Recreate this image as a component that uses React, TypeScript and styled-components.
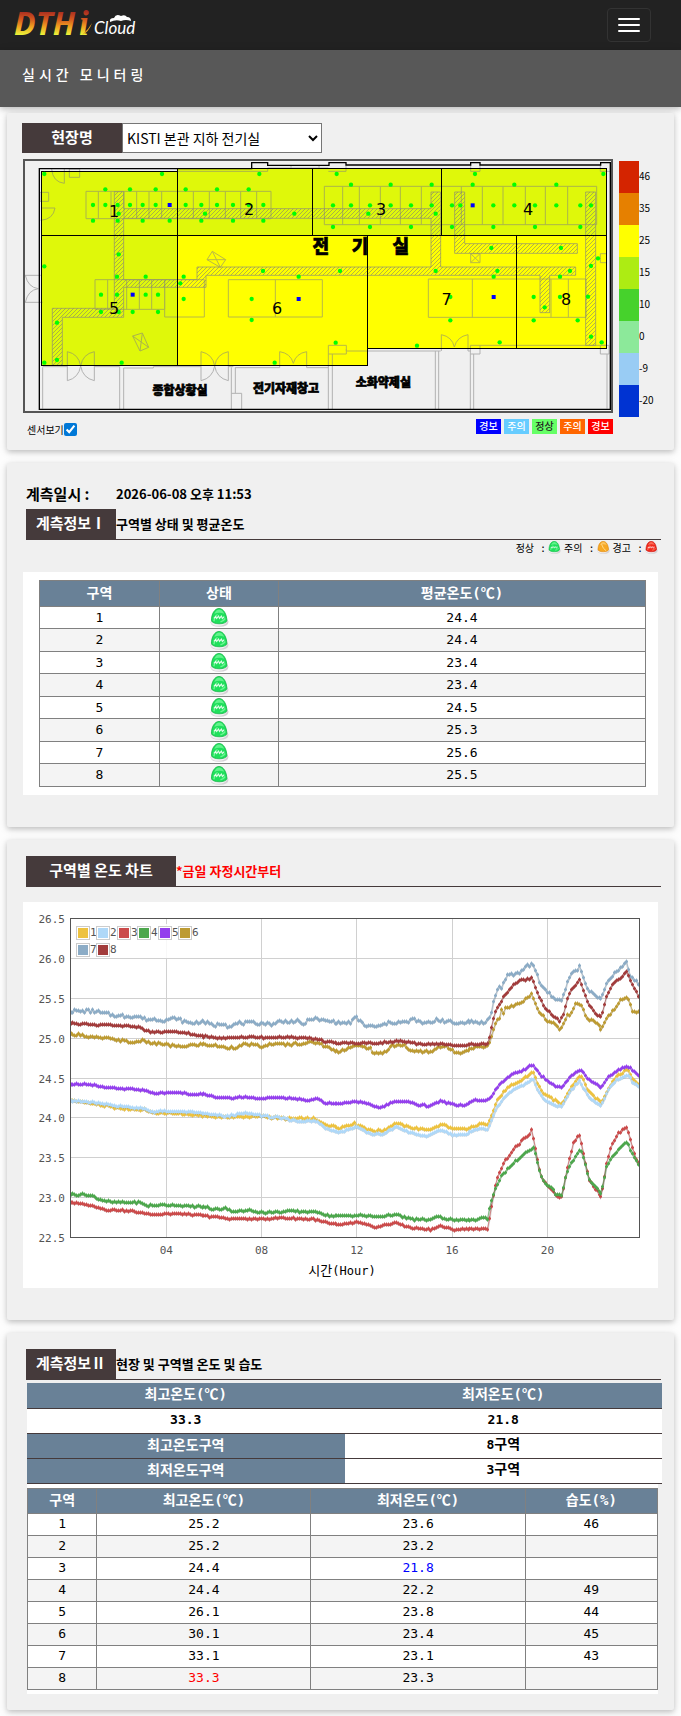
import { useState } from 'react';
import styled, { createGlobalStyle } from 'styled-components';

const SANS = "'Noto Sans CJK KR', 'Open Sans', sans-serif";
const MONO = "'DejaVu Sans Mono', 'Noto Sans CJK KR', monospace";

/* ---------- data ---------- */

const scale = [
  { color: '#d42400', label: '46' },
  { color: '#e68000', label: '35' },
  { color: '#ffff00', label: '25' },
  { color: '#adec13', label: '15' },
  { color: '#46d22c', label: '10' },
  { color: '#8ce99a', label: '0' },
  { color: '#99ccf4', label: '-9' },
  { color: '#0033d2', label: '-20' },
];

const levels = [
  { bg: '#0000ff', fg: '#fff', label: '경보' },
  { bg: '#66ccff', fg: '#fff', label: '주의' },
  { bg: '#66ff66', fg: '#222', label: '정상' },
  { bg: '#ff6600', fg: '#fff', label: '주의' },
  { bg: '#ff0000', fg: '#fff', label: '경보' },
];

const averages = ['24.4', '24.4', '23.4', '23.4', '24.5', '25.3', '25.6', '25.5'];

type ZoneRow = { high: string; low: string; humidity: string; highTone?: string; lowTone?: string };

const zoneRows: ZoneRow[] = [
  { high: '25.2', low: '23.6', humidity: '46' },
  { high: '25.2', low: '23.2', humidity: '' },
  { high: '24.4', low: '21.8', humidity: '', lowTone: '#0000ff' },
  { high: '24.4', low: '22.2', humidity: '49' },
  { high: '26.1', low: '23.8', humidity: '44' },
  { high: '30.1', low: '23.4', humidity: '45' },
  { high: '33.1', low: '23.1', humidity: '43' },
  { high: '33.3', low: '23.3', humidity: '', highTone: '#ff0000' },
];

// [hour, temperature] pairs, noise is the sensor jitter in degrees
const series = [
  {
    color: '#edc240', noise: 0.012,
    keys: [[0, 24.22], [1, 24.18], [2, 24.12], [3.2, 24.1], [3.4, 24.06], [4.5, 24.06], [5, 24.04], [6.5, 24.01], [8, 24.02], [9, 23.99], [10.2, 23.99], [10.6, 23.92], [11.3, 23.88], [11.9, 23.93], [12.2, 23.9], [12.6, 23.84], [13.1, 23.84], [13.65, 23.94], [14, 23.9], [14.6, 23.86], [15.1, 23.86], [15.6, 23.92], [16, 23.86], [16.7, 23.86], [17.2, 23.93], [17.5, 23.92], [17.7, 24.06], [17.9, 24.22], [18.3, 24.37], [18.8, 24.45], [19.2, 24.53], [19.4, 24.59], [19.6, 24.41], [19.9, 24.29], [20.6, 24.17], [20.9, 24.35], [21.38, 24.55], [21.7, 24.34], [22.28, 24.18], [22.6, 24.39], [22.9, 24.52], [23.35, 24.61], [23.5, 24.55], [23.7, 24.45], [23.86, 24.4]],
  },
  {
    color: '#afd8f8', noise: 0.008,
    keys: [[0, 24.22], [1, 24.19], [2, 24.15], [3, 24.12], [3.4, 24.08], [4.5, 24.08], [5.5, 24.06], [6.5, 24.02], [7.4, 24.06], [8, 24.03], [9, 23.99], [9.5, 23.96], [10.3, 23.96], [10.7, 23.87], [11.3, 23.82], [12, 23.89], [12.6, 23.8], [13.1, 23.79], [13.65, 23.89], [14.2, 23.82], [14.8, 23.77], [15.1, 23.79], [15.5, 23.85], [16, 23.79], [16.6, 23.79], [17, 23.86], [17.5, 23.86], [17.7, 23.99], [17.9, 24.14], [18.3, 24.29], [18.7, 24.38], [19.1, 24.42], [19.4, 24.49], [19.6, 24.35], [19.9, 24.22], [20.4, 24.15], [20.6, 24.15], [20.9, 24.31], [21.34, 24.47], [21.7, 24.27], [22.25, 24.15], [22.6, 24.36], [22.9, 24.47], [23.45, 24.54], [23.6, 24.44], [23.86, 24.4]],
  },
  {
    color: '#cb4b4b', noise: 0.01,
    keys: [[0, 22.94], [0.5, 22.92], [1.2, 22.88], [1.5, 22.85], [2.2, 22.84], [3, 22.81], [3.4, 22.79], [4, 22.8], [5, 22.79], [5.7, 22.77], [6.5, 22.74], [8, 22.73], [8.8, 22.75], [10.2, 22.73], [10.9, 22.67], [11.3, 22.66], [12, 22.69], [12.9, 22.63], [13.6, 22.69], [14.3, 22.62], [15.1, 22.6], [15.5, 22.65], [16, 22.6], [17, 22.61], [17.52, 22.61], [17.62, 22.82], [17.75, 23.03], [17.95, 23.3], [18.3, 23.49], [18.7, 23.64], [19.1, 23.76], [19.26, 23.79], [19.34, 23.85], [19.5, 23.62], [19.7, 23.3], [19.9, 23.18], [20.2, 23.1], [20.45, 23.01], [20.6, 23.01], [20.75, 23.26], [20.95, 23.53], [21.1, 23.7], [21.34, 23.79], [21.5, 23.55], [21.75, 23.22], [22.1, 23.07], [22.28, 23.01], [22.5, 23.43], [22.7, 23.64], [22.95, 23.79], [23.35, 23.89], [23.5, 23.73], [23.65, 23.55], [23.86, 23.42]],
  },
  {
    color: '#4da74d', noise: 0.011,
    keys: [[0, 23.04], [0.5, 23.04], [0.9, 23.02], [1.2, 22.98], [1.8, 22.94], [2.9, 22.94], [3.2, 22.9], [4, 22.91], [4.8, 22.9], [5.7, 22.88], [6, 22.85], [6.5, 22.87], [6.8, 22.83], [7.5, 22.84], [8.2, 22.81], [9, 22.83], [10.4, 22.82], [10.7, 22.78], [11.3, 22.77], [12, 22.78], [12.9, 22.76], [13.6, 22.79], [14.3, 22.73], [15, 22.72], [15.4, 22.76], [16, 22.72], [17, 22.72], [17.3, 22.75], [17.5, 22.74], [17.62, 22.91], [17.8, 23.1], [18.05, 23.25], [18.3, 23.35], [18.7, 23.46], [19.1, 23.56], [19.45, 23.63], [19.55, 23.47], [19.7, 23.3], [19.95, 23.15], [20.2, 23.13], [20.35, 23.04], [20.6, 23.03], [20.75, 23.26], [20.95, 23.41], [21.38, 23.61], [21.5, 23.49], [21.75, 23.22], [22.05, 23.13], [22.25, 23.04], [22.35, 23.16], [22.5, 23.39], [22.8, 23.54], [23.1, 23.63], [23.35, 23.7], [23.55, 23.57], [23.86, 23.4]],
  },
  {
    color: '#9440ed', noise: 0.008,
    keys: [[0, 24.43], [1, 24.41], [1.2, 24.39], [2, 24.37], [3, 24.35], [3.5, 24.31], [4.5, 24.32], [5, 24.3], [5.7, 24.29], [6, 24.27], [6.5, 24.25], [7.5, 24.26], [8, 24.24], [8.8, 24.26], [10, 24.22], [10.3, 24.25], [10.6, 24.19], [11.3, 24.18], [12, 24.21], [12.5, 24.17], [12.9, 24.13], [13.2, 24.15], [13.6, 24.21], [14, 24.21], [14.5, 24.17], [15, 24.15], [15.5, 24.21], [16.1, 24.17], [16.5, 24.16], [17, 24.22], [17.5, 24.22], [17.7, 24.27], [17.85, 24.37], [18.2, 24.47], [18.6, 24.56], [19, 24.6], [19.4, 24.67], [19.7, 24.54], [20.2, 24.42], [20.6, 24.37], [20.95, 24.52], [21.38, 24.61], [21.7, 24.48], [22.28, 24.38], [22.6, 24.52], [23, 24.6], [23.35, 24.65], [23.6, 24.6], [23.86, 24.53]],
  },
  {
    color: '#bd9b33', noise: 0.015,
    keys: [[0, 25.04], [0.5, 25.05], [0.7, 25.01], [1.5, 25], [2.2, 24.97], [2.6, 24.94], [2.9, 24.97], [3.4, 24.94], [4, 24.92], [4.5, 24.89], [5, 24.91], [5.6, 24.92], [6.2, 24.9], [6.6, 24.88], [7, 24.89], [7.4, 24.93], [8.1, 24.89], [8.4, 24.93], [9, 24.92], [10.4, 24.95], [10.7, 24.89], [11.2, 24.83], [11.5, 24.86], [12, 24.9], [12.55, 24.88], [12.7, 24.82], [12.95, 24.8], [13.2, 24.83], [13.5, 24.91], [14, 24.91], [14.1, 24.86], [14.6, 24.83], [15.2, 24.83], [15.35, 24.89], [15.7, 24.9], [16.15, 24.82], [16.4, 24.83], [17, 24.89], [17.52, 24.9], [17.7, 25.06], [17.87, 25.23], [18, 25.25], [18.08, 25.37], [18.15, 25.31], [18.25, 25.38], [18.5, 25.4], [18.9, 25.44], [19.2, 25.51], [19.34, 25.56], [19.6, 25.35], [20, 25.21], [20.3, 25.18], [20.5, 25.11], [20.7, 25.19], [20.85, 25.31], [20.95, 25.27], [21.2, 25.46], [21.4, 25.42], [21.6, 25.27], [22, 25.19], [22.15, 25.18], [22.28, 25.1], [22.4, 25.19], [22.6, 25.29], [22.9, 25.39], [23.1, 25.49], [23.35, 25.51], [23.5, 25.42], [23.6, 25.32], [23.86, 25.32]],
  },
  {
    color: '#8cacc6', noise: 0.02,
    keys: [[0, 25.34], [0.9, 25.34], [2, 25.28], [2.9, 25.27], [3.1, 25.24], [4, 25.23], [4.4, 25.25], [4.9, 25.19], [5.6, 25.21], [6, 25.16], [6.5, 25.19], [6.6, 25.14], [7, 25.19], [8, 25.19], [8.5, 25.18], [8.7, 25.21], [9.5, 25.21], [9.7, 25.17], [10.1, 25.25], [10.5, 25.23], [11.3, 25.19], [11.7, 25.19], [12, 25.26], [12.4, 25.15], [12.97, 25.15], [13.4, 25.2], [14.1, 25.2], [14.4, 25.24], [14.7, 25.19], [15.1, 25.19], [15.35, 25.24], [15.9, 25.2], [16.1, 25.18], [16.6, 25.21], [17.45, 25.19], [17.66, 25.31], [17.77, 25.48], [17.94, 25.64], [18.08, 25.64], [18.33, 25.78], [18.9, 25.83], [19.17, 25.92], [19.45, 25.92], [19.69, 25.67], [20.04, 25.58], [20.3, 25.48], [20.6, 25.48], [20.9, 25.76], [21.34, 25.9], [21.67, 25.62], [22, 25.52], [22.28, 25.49], [22.6, 25.75], [23.05, 25.86], [23.35, 25.96], [23.5, 25.79], [23.86, 25.67]],
  },
  {
    color: '#a23c3c', noise: 0.01,
    keys: [[0, 25.19], [1, 25.17], [2.9, 25.14], [3.1, 25.1], [3.5, 25.07], [4, 25.08], [4.8, 25.07], [5.3, 25.03], [6, 25.01], [8, 25.01], [9, 25.01], [10, 25], [10.5, 24.98], [10.6, 24.95], [11.3, 24.94], [13, 24.94], [13.7, 24.96], [14.6, 24.93], [15.1, 24.92], [15.6, 24.93], [16.2, 24.9], [17.1, 24.93], [17.52, 24.93], [17.62, 25.06], [17.8, 25.31], [17.94, 25.39], [18.1, 25.48], [18.4, 25.61], [18.75, 25.71], [19.2, 25.74], [19.34, 25.76], [19.6, 25.56], [19.9, 25.37], [20.3, 25.27], [20.5, 25.22], [20.64, 25.27], [20.9, 25.56], [21.34, 25.73], [21.44, 25.65], [21.7, 25.44], [22.1, 25.28], [22.28, 25.27], [22.5, 25.52], [22.8, 25.7], [23.1, 25.75], [23.35, 25.83], [23.5, 25.72], [23.86, 25.51]],
  },
];

/* ---------- styles ---------- */

const GlobalStyle = createGlobalStyle`
  * { box-sizing: border-box; }
  body {
    margin: 0;
    background: #fdfdfd;
    color: #000;
    font-family: ${SANS};
    font-size: 14px;
  }
`;

const Header = styled.header`
  display: flex;
  align-items: center;
  justify-content: space-between;
  height: 50px;
  padding: 0 30px 0 12px;
  background: #222;
`;

const LogoLink = styled.a`
  display: block;
  height: 50px;
`;

const MenuButton = styled.button`
  display: flex;
  flex-direction: column;
  justify-content: center;
  gap: 4px;
  width: 44px;
  height: 34px;
  padding: 0 10px;
  background: transparent;
  border: 1px solid #333;
  border-radius: 4px;
`;

const MenuBar = styled.span`
  height: 2px;
  border-radius: 1px;
  background: #fff;
`;

const TitleBar = styled.div`
  height: 57px;
  padding: 12px 22px;
  background: #585858;
  box-shadow: 0 2px 5px rgba(0, 0, 0, 0.16), 0 2px 10px rgba(0, 0, 0, 0.12);
`;

const PageTitle = styled.h1`
  margin: 0;
  color: #fff;
  font-size: 14px;
  font-weight: 500;
  line-height: 24px;
  letter-spacing: 4px;
`;

const Main = styled.main`
  display: flex;
  flex-direction: column;
  gap: 13px;
  padding: 6px 7px 7px;
`;

const Card = styled.section<{ $pad: string }>`
  padding: ${p => p.$pad};
  background: #f0f0f0;
  border-radius: 2px;
  box-shadow: 0 2px 5px rgba(0, 0, 0, 0.16), 0 2px 10px rgba(0, 0, 0, 0.12);
`;

const SiteRow = styled.div`
  display: flex;
  height: 30px;
`;

const SiteLabel = styled.label`
  width: 100px;
  background: #453a3b;
  color: #fff;
  font-size: 15px;
  font-weight: 700;
  line-height: 28px;
  text-align: center;
`;

const SiteSelect = styled.select`
  width: 200px;
  padding: 0;
  background: #fff;
  border: 1px solid #767676;
  border-radius: 0;
  color: #000;
  font-family: ${SANS};
  font-size: 14px;
`;

const PlanRow = styled.div`
  display: flex;
  gap: 6px;
  margin: 6px 0 0 1px;
`;

const PlanColumn = styled.div`
  flex: 1;
  min-width: 0;
`;

const PlanFrame = styled.div`
  border: 2px solid #555;

  svg {
    display: block;
    width: 100%;
  }
`;

const PlanFooter = styled.div`
  display: flex;
  justify-content: space-between;
  margin-top: 6px;
`;

const SensorToggle = styled.label`
  display: flex;
  align-items: center;
  padding: 4px 0 0 4px;
  font-size: 10px;
  line-height: 13px;

  input {
    width: 13px;
    height: 13px;
    margin: 0;
    accent-color: #0078d7;
  }
`;

const Levels = styled.div`
  display: flex;
  gap: 3px;
`;

const Level = styled.span<{ $bg: string; $fg: string }>`
  width: 25px;
  height: 15px;
  background: ${p => p.$bg};
  color: ${p => p.$fg};
  font-size: 10px;
  font-weight: 500;
  line-height: 14px;
  text-align: center;
`;

const ScaleColumn = styled.div`
  width: 40px;
  padding-top: 2px;
`;

const ScaleStep = styled.div<{ $color: string }>`
  height: 32px;
  border-left: 20px solid ${p => p.$color};
  font-size: 10px;
  line-height: 30px;
`;

const MeasuredAt = styled.div`
  display: grid;
  grid-template-columns: 90px 1fr;
  align-items: center;
  height: 28px;
  margin: 0 0 2px 3px;
  font-size: 15px;
  font-weight: 700;

  time {
    font-size: 13px;
  }
`;

const Heading = styled.div`
  display: flex;
  align-items: center;
  height: 31px;
  margin: 0 -3px 0 3px;
  border-bottom: 1px solid #453a3b;
`;

const HeadingLabel = styled.h2<{ $wide?: boolean }>`
  width: ${p => (p.$wide ? '150px' : '90px')};
  height: 30px;
  margin: 0;
  background: #453a3b;
  color: #fff;
  font-size: 15px;
  font-weight: 700;
  line-height: 28px;
  text-align: center;
`;

const HeadingNote = styled.span<{ $alert?: boolean }>`
  color: ${p => (p.$alert ? '#ff0000' : '#000')};
  font-size: 13px;
  font-weight: 700;
  line-height: 28px;
`;

const StatusLegend = styled.div`
  display: flex;
  align-items: center;
  justify-content: flex-end;
  gap: 3px;
  height: 15px;
  margin-bottom: 17px;
  font-family: ${MONO};
  font-size: 10px;
`;

const StatusItem = styled.span`
  display: flex;
  align-items: center;
  gap: 2px;
`;

const Panel = styled.div<{ $pad?: string }>`
  padding: ${p => p.$pad || '0'};
  background: #fff;

  > svg {
    display: block;
    width: 100%;
  }
`;

const ChartPanel = styled(Panel)`
  margin-top: 15px;
`;

const DataTable = styled.table<{ $roomy?: boolean }>`
  width: 100%;
  border-collapse: collapse;
  table-layout: fixed;
  font-family: ${MONO};
  font-size: 13px;

  th,
  td {
    padding: 0;
    border: 1px solid #808080;
    text-align: center;
  }

  th {
    height: ${p => (p.$roomy ? '26px' : '25px')};
    padding-bottom: 2px;
    background: #698197;
    color: #fff;
    font-size: 14px;
    line-height: 20px;
  }

  td {
    height: 22px;
    line-height: 18px;
  }

  tbody tr:nth-child(even) td {
    height: ${p => (p.$roomy ? '23px' : '22px')};
    background: #f4f4f4;
  }

  svg {
    display: block;
    margin: 0 auto;
  }
`;

const Tone = styled.span<{ $color?: string }>`
  color: ${p => p.$color || '#000'};
`;

const SummaryTable = styled.table`
  width: calc(100% + 4px);
  margin-top: 3px;
  border-collapse: collapse;
  table-layout: fixed;
  font-family: ${MONO};
  font-size: 14px;

  th,
  td {
    height: 25px;
    padding: 0 0 2px;
    border-bottom: 1px solid #453a3b;
    font-weight: 700;
    line-height: 20px;
    text-align: center;
  }

  th {
    background: #698197;
    color: #fff;
  }

  td {
    background: #fff;
  }
`;

const Digits = styled.span`
  font-size: 13px;
`;

const Indent = styled.div`
  margin-left: 4px;
`;

/* ---------- drawings ---------- */

const Logo = () => (
  <svg width="150" height="50" viewBox="0 0 150 50" role="img" aria-label="DTHi Cloud">
    <defs>
      <linearGradient id="flame" x1="0" y1="11" x2="0" y2="35" gradientUnits="userSpaceOnUse">
        <stop offset="0" stopColor="#a52a20" />
        <stop offset="0.35" stopColor="#d4591f" />
        <stop offset="0.65" stopColor="#f0a020" />
        <stop offset="1" stopColor="#e9f53a" />
      </linearGradient>
    </defs>
    <text x="2" y="35" fontFamily="'Open Sans', sans-serif" fontSize="32" fontWeight="700" fontStyle="italic" fill="url(#flame)">DTH</text>
    <text x="67" y="35" fontFamily="'Liberation Serif', serif" fontSize="35" fontWeight="700" fontStyle="italic" fill="url(#flame)">i</text>
    <path d="M71 34 Q76 30 80 23 Q77 32 70 35Z" fill="#e8a020" />
    <text x="82" y="34" fontFamily="Lato, sans-serif" fontSize="17" fontStyle="italic" fill="#fff">Cloud</text>
    <path d="M98 22 Q97 18 102 18 Q104 13 109 16 Q113 14 115 17 Q119 17 119 21 Q114 19 109 21 Q104 19 98 22Z" fill="#fff" />
  </svg>
);

const tones = {
  green: ['#1fe05c', '#0cb440', '#8dffab'],
  amber: ['#f7a823', '#d98208', '#ffd98a'],
  red: ['#f22a1c', '#bd0d08', '#ff9a80'],
};

const StatusIcon = ({ tone = 'green', size = 19 }: { tone?: keyof typeof tones; size?: number }) => {
  const [fill, edge, shine] = tones[tone];
  return (
    <svg width={size} height={size} viewBox="0 0 20 20" aria-hidden="true">
      <path d="M0.500 15 Q1 19.800 10 19.800 Q19.500 19.800 19.500 14.500 L17 10 H3Z" fill="#d5d2d6" />
      <path d="M0.500 15 Q2 18.800 9 18.800 Q16 18.800 18 14Z" fill="#f2f0f4" />
      <path d="M1.500 13 C1.500 7 4.500 0.500 9.500 0.500 C14.500 0.500 17.500 7 17.800 13 C17.500 17.800 2 17.800 1.500 13Z" fill={fill} stroke={edge} strokeWidth="0.800" />
      <path d="M4.500 6 Q6.500 1.500 9.500 1.500 Q13 1.500 15 6 Q10 4 4.500 6Z" fill={shine} opacity="0.600" />
      {tone === 'amber' ? (
        <path d="M7 5 Q9 12 14 15" stroke={shine} strokeWidth="1.500" fill="none" />
      ) : (
        <>
          <path d="M4 14 Q6 7 8 7 M11 14 Q13 15 16 11" stroke={shine} strokeWidth="1.500" fill="none" opacity="0.700" />
          <path d="M4 11 L6 9 L7 11 L9 8.500 L10 11 L12 8.500 L13 11 L15 9" stroke="#fff" strokeWidth="1.200" fill="none" opacity="0.850" />
        </>
      )}
    </svg>
  );
};

const zones = [
  { n: 1, x: 124, y: 64, w: 408, h: 192, fill: '#dff80a', tx: 342, ty: 201 },
  { n: 2, x: 532, y: 56, w: 405, h: 200, fill: '#dff80a', tx: 747, ty: 195 },
  { n: 3, x: 937, y: 56, w: 387, h: 200, fill: '#dff80a', tx: 1143, ty: 195 },
  { n: 4, x: 1324, y: 56, w: 495, h: 200, fill: '#dff80a', tx: 1584, ty: 195 },
  { n: 5, x: 124, y: 256, w: 408, h: 390, fill: '#dff80a', tx: 342, ty: 491 },
  { n: 6, x: 532, y: 256, w: 570, h: 390, fill: '#ffff00', tx: 831, ty: 491 },
  { n: 7, x: 1102, y: 256, w: 447, h: 339, fill: '#ffff00', tx: 1340, ty: 464 },
  { n: 8, x: 1549, y: 256, w: 270, h: 339, fill: '#ffff00', tx: 1698, ty: 464 },
];

const ducts = [
  'M343 125H371V176H1293V126H1322V351H1727V376H1649V488H1620V376H618V412H371V502H187V646H157V475H343ZM371 205V389H591V351H1293V205Z',
  'M1364 126H1394V281H1732V310H1364Z',
  'M1757 126H1787V586H1757Z',
];

const cabinets = [
  'M258 124H813V206H258ZM295 124V206M333 124V206M372 124V206M410 124V206M447 124V206M485 124V206M580 124V206M628 124V206M676 124V206M722 124V206M770 124V206',
  'M973 109H1790V224H973ZM1028 109V224M1078 109V224M1141 109V224M1201 109V224M1264 109V224M1384 109V224M1447 109V224M1509 109V224M1576 109V224M1636 109V224M1703 109V224',
  'M285 389H494V478H285ZM323 389V478M380 389V478M418 389V478M455 389V478M494 389H613V501H494Z',
  'M685 389H967V501H685ZM826 389V501',
  'M1285 387H1758V502H1285ZM1417 387V502M1653 387V502M1705 387V502',
];

const walls = [
  'M128 652V776M128 650H202M283 650H359V778M371 778V654H460V650H603M685 650H700M694 652V778M706 652V730M694 730H725V778M706 653H839V605M920 605V653H985',
  'M985 778V586H1039V612H985M997 612V778M1039 597V603H1322M1306 603V778M1316 603V778M1324 554V603M1404 554V603H1412M1411 586H1440V612H1411ZM1411 612V778M1421 612V778M1440 586H1819M1801 586H1827V612H1801ZM1821 612V776',
  'M532 64H803V56M803 54H985M985 64H1038V46M1412 45V64H1440V45M1801 45V64H1830M873 46V56M957 46V56',
  'M202 605V692M283 605V692M202 605Q236 612 242 648Q236 684 202 692M283 605Q248 612 242 648Q248 684 283 692',
  'M603 605V692M685 605V692M603 605Q638 612 644 648Q638 684 603 692M685 605Q650 612 644 648Q650 684 685 692',
  'M839 605Q872 610 880 640Q888 610 920 605M1324 554Q1356 560 1363 591Q1371 560 1404 554',
  'M75 376H122M75 457H128M76 376Q84 412 115 416Q84 420 76 457',
  'M155 57Q158 96 193 100V57M208 57H239V82H208ZM120 127H146V154H120ZM124 174H165Q160 208 122 211',
  'M637 304L677 329L661 352L621 329ZM637 304L661 352M677 329L621 329M398 558L427 549L446 592L420 603ZM398 558L446 592M427 549L420 603',
  'M1412 311H1440V338H1412ZM1412 311L1440 338M1440 311L1412 338M1820 311H1801V338H1820',
];

const sensors = [
  [133, 72], [486, 72], [778, 72], [1010, 72], [1425, 72], [1810, 72],
  [1053, 104], [1172, 104], [1295, 104], [1418, 104], [1543, 104], [1669, 104],
  [316, 118], [390, 118], [467, 118], [557, 118], [651, 118], [746, 118],
  [279, 165], [316, 165], [353, 165], [390, 165], [428, 165], [467, 165], [557, 165], [604, 165], [651, 165], [699, 165], [746, 165], [790, 165],
  [999, 166], [1053, 166], [1110, 166], [1172, 166], [1233, 166], [1295, 166], [1356, 166], [1381, 166], [1480, 166], [1543, 166], [1605, 166], [1669, 166], [1741, 166], [1773, 166],
  [356, 191], [615, 191], [883, 191], [1105, 191], [1307, 191],
  [279, 212], [353, 212], [428, 212], [509, 212], [604, 212], [699, 212], [790, 212],
  [999, 231], [1110, 231], [1233, 231], [1356, 231], [1480, 231], [1605, 231], [1741, 231],
  [1474, 294], [1683, 294], [356, 313], [1794, 325], [133, 349], [1773, 348],
  [789, 363], [1020, 363], [1307, 363], [1492, 363], [1710, 363],
  [351, 380], [437, 380], [551, 380], [896, 380], [1481, 380], [1680, 380], [541, 400],
  [303, 434], [351, 434], [437, 434], [474, 434], [551, 447], [755, 447], [1351, 441], [1601, 441], [1680, 441], [1764, 440],
  [1634, 472], [303, 486], [356, 486], [398, 486], [474, 486], [755, 510], [1351, 511], [1601, 511], [1733, 511],
  [171, 518], [1773, 560], [1007, 578], [1499, 577], [1805, 577], [1251, 587],
  [171, 630], [133, 638], [365, 638], [824, 638],
];

const humiditySensors = [[509, 165], [398, 434], [896, 447], [1418, 166], [1481, 441]];

const FloorPlan = ({ showSensors }: { showSensors: boolean }) => (
  <svg viewBox="75 33 1758 750" role="img" aria-label="전기실 평면도">
    <defs>
      <pattern id="hatch" width="12" height="12" patternUnits="userSpaceOnUse">
        <path d="M-3 3L3 -3M0 12L12 0M9 15L15 9" stroke="#777" strokeWidth="2" opacity="0.800" />
      </pattern>
    </defs>
    {zones.map(z => (
      <rect key={z.n} x={z.x} y={z.y} width={z.w} height={z.h} fill={z.fill} />
    ))}
    <g fill="none" stroke="#808080" strokeWidth="3" opacity="0.550">
      {cabinets.map(d => <path key={d} d={d} />)}
      {walls.map(d => <path key={d} d={d} />)}
    </g>
    {ducts.map(d => (
      <path key={d} d={d} fill="url(#hatch)" fillRule="evenodd" stroke="#909070" strokeWidth="3" strokeOpacity="0.700" />
    ))}
    <path
      d="M118 56H755V38H803V46H987V38H1038V45H1412V38H1440V45H1802V38H1831V778H118Z"
      fill="none"
      stroke="#000"
      strokeWidth="4"
    />
    <g fill="none" stroke="#000" strokeWidth="3" shapeRendering="crispEdges">
      {zones.map(z => (
        <rect key={z.n} x={z.x} y={z.y} width={z.w} height={z.h} />
      ))}
    </g>
    <g fontFamily={SANS} fontWeight="900" textAnchor="middle" fill="#000" stroke="#000" strokeWidth="2">
      <text x="962" y="308" fontSize="54">전</text>
      <text x="1080" y="308" fontSize="54">기</text>
      <text x="1202" y="308" fontSize="54">실</text>
      <text x="540" y="734" fontSize="36">종합상황실</text>
      <text x="858" y="730" fontSize="36">전기자재창고</text>
      <text x="1150" y="712" fontSize="36">소화약제실</text>
    </g>
    {showSensors && (
      <>
        <g fill="#00ff00">
          {sensors.map(([x, y]) => <circle key={`${x}-${y}`} cx={x} cy={y} r="6.500" />)}
        </g>
        <g fill="#0000ff">
          {humiditySensors.map(([x, y]) => <rect key={`${x}-${y}`} x={x - 6} y={y - 6} width="12" height="12" />)}
        </g>
      </>
    )}
    <g fontFamily="'DejaVu Sans', sans-serif" fontSize="48" textAnchor="middle" fill="#000">
      {zones.map(z => <text key={z.n} x={z.tx} y={z.ty}>{z.n}</text>)}
    </g>
  </svg>
);

const PLOT = { left: 47.5, right: 616.5, top: 16.5, bottom: 335.5 };
const toX = (hour: number) => 48 + hour * 23.82;
const toY = (temp: number) => PLOT.top + (26.5 - temp) * 79.75;

const jitter = (i: number, seed: number) => {
  const v = Math.sin(i * 12.9898 + seed * 78.233) * 43758.5453;
  return (v - Math.floor(v)) * 2 - 1;
};

const trace = (keys: number[][], noise: number, seed: number) => {
  const points: number[][] = [];
  let k = 0;
  for (let i = 0; i <= 286; i++) {
    const hour = i / 12;
    while (k < keys.length - 2 && keys[k + 1][0] < hour) k++;
    const [h0, t0] = keys[k];
    const [h1, t1] = keys[k + 1];
    const temp = t0 + ((t1 - t0) * (hour - h0)) / (h1 - h0) + jitter(i, seed) * noise;
    points.push([Math.floor(toX(hour)) + 0.5, Math.floor(toY(temp)) + 0.5]);
  }
  return points;
};

const temps = [26.5, 26, 25.5, 25, 24.5, 24, 23.5, 23, 22.5];
const hours = [4, 8, 12, 16, 20];

const TemperatureChart = () => (
  <svg viewBox="0 0 635 386" role="img" aria-label="구역별 온도 차트">
    <g stroke="#d0d0d0" strokeWidth="1">
      {temps.map(t => (
        <line key={t} x1={PLOT.left} x2={PLOT.right} y1={Math.floor(toY(t)) + 0.5} y2={Math.floor(toY(t)) + 0.5} />
      ))}
      {hours.map(h => (
        <line key={h} x1={Math.floor(toX(h)) + 0.5} x2={Math.floor(toX(h)) + 0.5} y1={PLOT.top} y2={PLOT.bottom} />
      ))}
    </g>
    {series.map((s, i) => {
      const points = trace(s.keys, s.noise, i + 1);
      return (
        <g key={s.color} fill="none">
          <polyline points={points.map(([x, y]) => `${x},${y + 1}`).join(' ')} stroke="#000" strokeOpacity="0.150" strokeWidth="2" />
          <polyline points={points.map(p => p.join(',')).join(' ')} stroke={s.color} strokeOpacity="0.600" />
          <path d={points.map(([x, y]) => `M${x} ${y}h0`).join('')} stroke={s.color} strokeWidth="3" strokeLinecap="round" />
          <path d={points.map(([x, y]) => `M${x - 1.5} ${y}h3M${x} ${y - 2}v4`).join('')} stroke={s.color} />
        </g>
      );
    })}
    <rect x={PLOT.left} y={PLOT.top} width={PLOT.right - PLOT.left} height={PLOT.bottom - PLOT.top} fill="none" stroke="#545454" />
    <rect x="52" y="22" width="125" height="34" fill="#fff" opacity="0.850" />
    <g fontFamily={MONO} fontSize="11" fill="#545454">
      {series.map((s, i) => {
        const x = Math.round(53 + (i % 6) * 20.4);
        const y = 24 + Math.floor(i / 6) * 17;
        return (
          <g key={s.color}>
            <rect x={x + 0.5} y={y + 0.5} width="13" height="13" fill="#fff" stroke="#ccc" />
            <rect x={x + 2} y={y + 2} width="10" height="10" fill={s.color} />
            <text x={x + 14} y={y + 10}>{i + 1}</text>
          </g>
        );
      })}
      <g textAnchor="end">
        {temps.map(t => <text key={t} x="42" y={Math.floor(toY(t)) + 5}>{t.toFixed(1)}</text>)}
      </g>
      <g textAnchor="middle">
        {hours.map(h => <text key={h} x={toX(h)} y="352">{String(h).padStart(2, '0')}</text>)}
      </g>
    </g>
    <text x="319" y="373" textAnchor="middle" fontFamily={MONO} fontSize="12">
      <tspan fontSize="13">시간</tspan>(Hour)
    </text>
  </svg>
);

/* ---------- page ---------- */

const App = () => {
  const [showSensors, setShowSensors] = useState(true);

  return (
    <>
      <GlobalStyle />
      <Header>
        <LogoLink href="#"><Logo /></LogoLink>
        <MenuButton type="button" aria-label="메뉴">
          <MenuBar />
          <MenuBar />
          <MenuBar />
        </MenuButton>
      </Header>
      <TitleBar>
        <PageTitle>실시간 모니터링</PageTitle>
      </TitleBar>

      <Main>
        <Card $pad="10px 15px 14px">
          <SiteRow>
            <SiteLabel htmlFor="site">현장명</SiteLabel>
            <SiteSelect id="site">
              <option>KISTI 본관 지하 전기실</option>
            </SiteSelect>
          </SiteRow>
          <PlanRow>
            <PlanColumn>
              <PlanFrame><FloorPlan showSensors={showSensors} /></PlanFrame>
              <PlanFooter>
                <SensorToggle>
                  센서보기
                  <input type="checkbox" checked={showSensors} onChange={e => setShowSensors(e.target.checked)} />
                </SensorToggle>
                <Levels>
                  {levels.map(l => (
                    <Level key={l.bg} $bg={l.bg} $fg={l.fg}>{l.label}</Level>
                  ))}
                </Levels>
              </PlanFooter>
            </PlanColumn>
            <ScaleColumn>
              {scale.map(s => (
                <ScaleStep key={s.label} $color={s.color}>{s.label}</ScaleStep>
              ))}
            </ScaleColumn>
          </PlanRow>
        </Card>

        <Card $pad="16px 16px 32px">
          <MeasuredAt>
            <span>계측일시 :</span>
            <time dateTime="2026-06-08T23:53">2026-06-08 오후 11:53</time>
          </MeasuredAt>
          <Heading>
            <HeadingLabel>계측정보Ⅰ</HeadingLabel>
            <HeadingNote>구역별 상태 및 평균온도</HeadingNote>
          </Heading>
          <StatusLegend>
            <StatusItem>정상 : <StatusIcon size={13} /></StatusItem>
            <StatusItem>주의 : <StatusIcon size={13} tone="amber" /></StatusItem>
            <StatusItem>경고 : <StatusIcon size={13} tone="red" /></StatusItem>
          </StatusLegend>
          <Panel $pad="8px 12px 8px 16px">
            <DataTable $roomy>
              <colgroup>
                <col style={{ width: '120px' }} />
                <col style={{ width: '119px' }} />
                <col />
              </colgroup>
              <thead>
                <tr><th>구역</th><th>상태</th><th>평균온도(℃)</th></tr>
              </thead>
              <tbody>
                {averages.map((avg, i) => (
                  <tr key={i}>
                    <td>{i + 1}</td>
                    <td><StatusIcon /></td>
                    <td>{avg}</td>
                  </tr>
                ))}
              </tbody>
            </DataTable>
          </Panel>
        </Card>

        <Card $pad="16px 16px 32px">
          <Heading>
            <HeadingLabel $wide>구역별 온도 차트</HeadingLabel>
            <HeadingNote $alert>*금일 자정시간부터</HeadingNote>
          </Heading>
          <ChartPanel><TemperatureChart /></ChartPanel>
        </Card>

        <Card $pad="16px 16px 16px">
          <Heading>
            <HeadingLabel>계측정보Ⅱ</HeadingLabel>
            <HeadingNote>현장 및 구역별 온도 및 습도</HeadingNote>
          </Heading>
          <Indent>
            <SummaryTable>
              <tbody>
                <tr><th>최고온도(℃)</th><th>최저온도(℃)</th></tr>
                <tr><td><Digits>33.3</Digits></td><td><Digits>21.8</Digits></td></tr>
                <tr><th>최고온도구역</th><td><Digits>8</Digits>구역</td></tr>
                <tr><th>최저온도구역</th><td><Digits>3</Digits>구역</td></tr>
              </tbody>
            </SummaryTable>
            <Panel $pad="4px 0">
              <DataTable>
                <colgroup>
                  <col style={{ width: '11%' }} />
                  <col style={{ width: '34%' }} />
                  <col style={{ width: '34%' }} />
                  <col style={{ width: '21%' }} />
                </colgroup>
                <thead>
                  <tr><th>구역</th><th>최고온도(℃)</th><th>최저온도(℃)</th><th>습도(%)</th></tr>
                </thead>
                <tbody>
                  {zoneRows.map((row, i) => (
                    <tr key={i}>
                      <td>{i + 1}</td>
                      <td><Tone $color={row.highTone}>{row.high}</Tone></td>
                      <td><Tone $color={row.lowTone}>{row.low}</Tone></td>
                      <td>{row.humidity}</td>
                    </tr>
                  ))}
                </tbody>
              </DataTable>
            </Panel>
          </Indent>
        </Card>
      </Main>
    </>
  );
};

export default App;
